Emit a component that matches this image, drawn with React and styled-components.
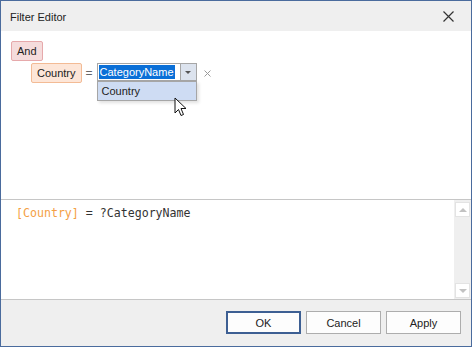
import React from "react";
import styled, { createGlobalStyle } from "styled-components";

const Global = createGlobalStyle`
  html, body { margin: 0; padding: 0; background: #ffffff; }
  * { box-sizing: border-box; }
`;

const Window = styled.div`
  width: 472px;
  height: 347px;
  border: 1px solid #4a6b9d;
  display: flex;
  flex-direction: column;
  font-family: "Liberation Sans", Arial, sans-serif;
  font-size: 11px;
  color: #222;
  background: #fff;
`;

const TitleBar = styled.div`
  height: 30px;
  flex: none;
  background: #efefef;
  display: flex;
  align-items: center;
  justify-content: space-between;
  padding: 0 17px 0 9px;
`;

const Title = styled.span`
  font-size: 11px;
  color: #222;
  padding-top: 1px;
`;

const CloseIcon = styled.svg`
  width: 11px;
  height: 11px;
  display: block;
`;

const EditorArea = styled.div`
  height: 168px;
  flex: none;
  padding: 10px 10px;
  display: flex;
  flex-direction: column;
  align-items: flex-start;
`;

const Tag = styled.div`
  height: 20px;
  padding: 0 5px;
  display: flex;
  align-items: center;
  border: 1px solid ${(p) => p.$border};
  background: ${(p) => p.$bg};
  border-radius: 2px;
  color: #222;
  font-size: 11px;
`;

const ConditionRow = styled.div`
  margin-top: 2px;
  margin-left: 20px;
  display: flex;
  align-items: flex-start;
`;

const Operator = styled.span`
  width: 15px;
  height: 19px;
  display: flex;
  align-items: center;
  justify-content: center;
  font-size: 12px;
  color: #666;
`;

const ComboWrap = styled.div`
  position: relative;
  width: 100px;
  height: 18px;
`;

const Combo = styled.div`
  width: 100%;
  height: 100%;
  border: 1px solid #a6a6a6;
  background: #fff;
  display: flex;
  align-items: stretch;
`;

const ComboText = styled.div`
  flex: 1;
  display: flex;
  align-items: center;
  padding-left: 1px;
`;

const Selected = styled.span`
  background: #0a6fd7;
  color: #fff;
  line-height: 14px;
  padding: 0 1px;
  font-size: 11px;
`;

const DropButton = styled.div`
  width: 16px;
  background: #dce3ee;
  border-left: 1px solid #a6a6a6;
  display: flex;
  align-items: center;
  justify-content: center;
`;

const Triangle = styled.span`
  width: 0;
  height: 0;
  border-left: 3px solid transparent;
  border-right: 3px solid transparent;
  border-top: 3px solid #555;
`;

const DropList = styled.div`
  position: absolute;
  left: 0;
  top: 18px;
  width: 100px;
  height: 20px;
  background: #cedcf3;
  border: 1px solid #a6a6a6;
  box-shadow: 2px 2px 3px rgba(0, 0, 0, 0.12);
  display: flex;
  align-items: center;
  padding-left: 4px;
  font-size: 11px;
  color: #222;
`;

const Cursor = styled.svg`
  position: absolute;
  left: 77px;
  top: 34px;
  width: 15px;
  height: 21px;
`;

const RemoveIcon = styled.svg`
  margin-left: 7px;
  margin-top: 7px;
  width: 7px;
  height: 7px;
`;

const Separator = styled.div`
  height: 1px;
  flex: none;
  background: #c6c6c6;
`;

const TextPane = styled.div`
  height: 99px;
  flex: none;
  display: flex;
`;

const Expression = styled.div`
  flex: 1;
  padding: 5px 0 0 15px;
  font-family: "DejaVu Sans Mono", "Liberation Mono", monospace;
  font-size: 11.6px;
  line-height: 16px;
  color: #333;
`;

const FieldRef = styled.span`
  color: #f4a044;
`;

const ScrollBar = styled.div`
  width: 17px;
  background: #efefef;
  padding: 2px 1px 1px 1px;
  display: flex;
  flex-direction: column;
  justify-content: space-between;
`;

const ScrollButton = styled.div`
  height: 15px;
  background: #fff;
  border: 1px solid #e3e3e3;
  display: flex;
  align-items: center;
  justify-content: center;
`;

const ScrollArrow = styled.span`
  width: 0;
  height: 0;
  border-left: 4px solid transparent;
  border-right: 4px solid transparent;
  ${(p) => (p.$up ? "border-bottom: 4px solid #c2c2c2;" : "border-top: 4px solid #c2c2c2;")}
`;

const Footer = styled.div`
  flex: 1;
  background: #efefef;
  display: flex;
  justify-content: flex-end;
  align-items: flex-start;
  gap: 5px;
  padding: 11px 10px 0 0;
`;

const Button = styled.button`
  width: 75px;
  height: 23px;
  font-family: "Liberation Sans", Arial, sans-serif;
  font-size: 11px;
  color: #222;
  background: #fdfdfd;
  border: ${(p) => (p.$primary ? "2px solid #3d5f93" : "1px solid #adadad")};
  padding: 0;
`;

export default function App() {
  return (
    <>
      <Global />
      <Window>
        <TitleBar>
          <Title>Filter Editor</Title>
          <CloseIcon viewBox="0 0 11 11">
            <path d="M0.5 0.5 L10.5 10.5 M10.5 0.5 L0.5 10.5" stroke="#333" strokeWidth="1.2" fill="none" />
          </CloseIcon>
        </TitleBar>
        <EditorArea>
          <Tag $bg="#f5dcdc" $border="#e6a9ab">And</Tag>
          <ConditionRow>
            <Tag $bg="#fde6d8" $border="#f3bb95">Country</Tag>
            <Operator>=</Operator>
            <ComboWrap>
              <Combo>
                <ComboText>
                  <Selected>CategoryName</Selected>
                </ComboText>
                <DropButton>
                  <Triangle />
                </DropButton>
              </Combo>
              <DropList>Country</DropList>
              <Cursor viewBox="0 0 15 21">
                <path
                  d="M1 1 L1 16 L4.5 12.5 L7 18.5 L9.5 17.5 L7 11.5 L12 11.5 Z"
                  fill="#fff"
                  stroke="#111"
                  strokeWidth="1"
                  strokeLinejoin="round"
                />
              </Cursor>
            </ComboWrap>
            <RemoveIcon viewBox="0 0 7 7">
              <path d="M0.5 0.5 L6.5 6.5 M6.5 0.5 L0.5 6.5" stroke="#9a9a9a" strokeWidth="1" fill="none" />
            </RemoveIcon>
          </ConditionRow>
        </EditorArea>
        <Separator />
        <TextPane>
          <Expression>
            <FieldRef>[Country]</FieldRef> = ?CategoryName
          </Expression>
          <ScrollBar>
            <ScrollButton>
              <ScrollArrow $up />
            </ScrollButton>
            <ScrollButton>
              <ScrollArrow />
            </ScrollButton>
          </ScrollBar>
        </TextPane>
        <Separator />
        <Footer>
          <Button $primary>OK</Button>
          <Button>Cancel</Button>
          <Button>Apply</Button>
        </Footer>
      </Window>
    </>
  );
}
